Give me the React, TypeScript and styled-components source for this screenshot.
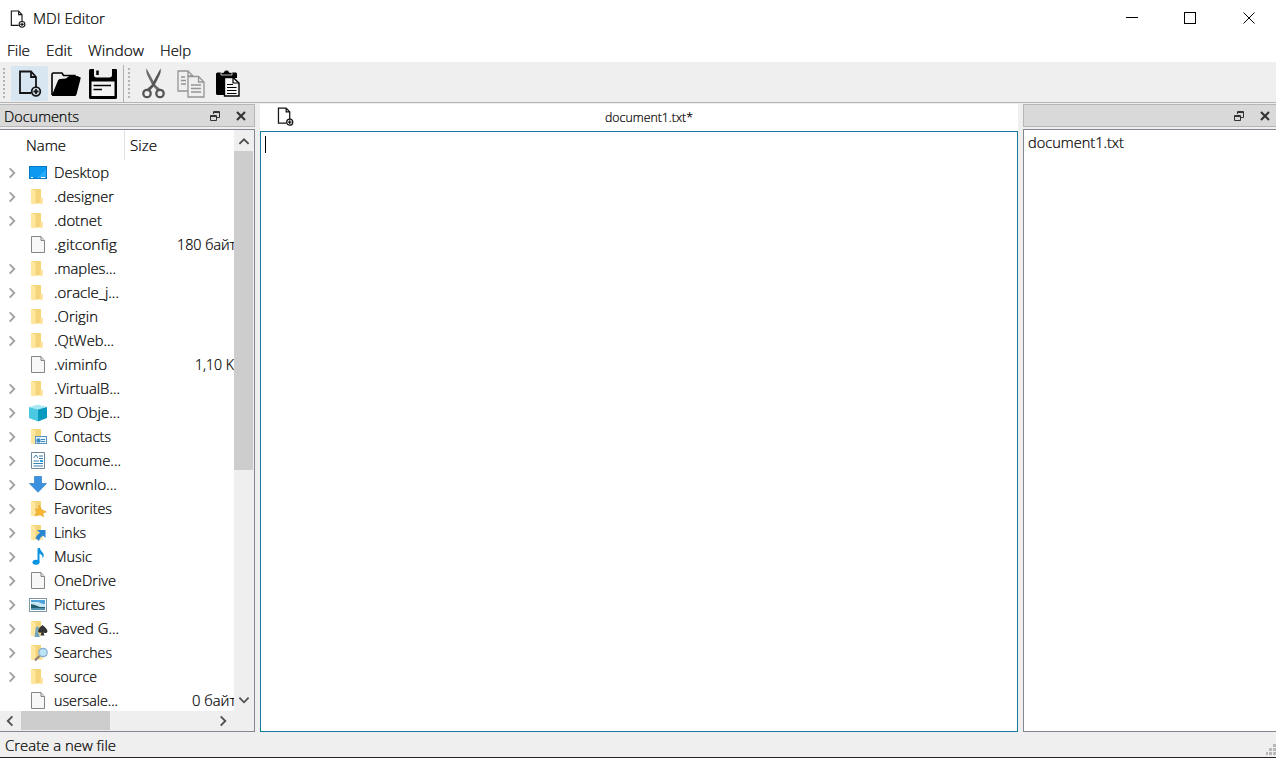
import React from 'react';
import styled, { createGlobalStyle } from 'styled-components';

const Global = createGlobalStyle`
  * { box-sizing: border-box; }
  html, body { margin: 0; padding: 0; overflow: hidden; }
  body { font-family: "Open Sans", "Noto Sans", sans-serif; font-size: 14px; font-weight: 300; color: #000; background: #efefef; }
  svg { display: block; flex: none; }
`;

const Window = styled.div`
  display: flex;
  flex-direction: column;
  width: 1276px;
  height: 758px;
  background: #efefef;
  border-bottom: 1px solid #2b2022;
`;

const Label = styled.span<{ $w: number }>`
  flex: none;
  width: ${p => p.$w}px;
  line-height: 20px;
  white-space: pre;
`;

const TextSvg = styled.svg<{ $size: number }>`
  overflow: visible;
  text { font-size: ${p => p.$size}px; fill: #000; stroke: #000; stroke-width: .22px; }
`;

function Text({ children, w, size = 14 }: { children: string; w: number; size?: number }) {
  return (
    <Label $w={w}>
      <TextSvg $size={size} width={w} height="20">
        <text x="0" y="15" textLength={w} lengthAdjust="spacingAndGlyphs">{children}</text>
      </TextSvg>
    </Label>
  );
}

const TitleBar = styled.header`
  display: flex;
  align-items: center;
  height: 37px;
  padding-left: 10px;
  background: #fff;
`;
const Caption = styled.div`
  flex: 1;
  margin-left: 7px;
`;
const WindowButton = styled.div`
  display: flex;
  align-items: center;
  justify-content: center;
  width: 58px;
  height: 36px;
  padding-bottom: 1px;
  &:last-child { width: 57px; padding-left: 3px; }
`;

const MenuBar = styled.nav`
  display: flex;
  align-items: center;
  gap: 16px;
  height: 26px;
  padding: 3px 0 0 7px;
  background: #fff;
  border-bottom: 1px solid #f0f0f0;
`;

const ToolBar = styled.div`
  display: flex;
  align-items: center;
  height: 40px;
  padding-top: 2px;
  border-bottom: 1px solid #b4b4b4;
`;
const Handle = styled.div<{ $ml: number; $mr: number }>`
  width: 2px;
  height: 31px;
  margin: 0 ${p => p.$mr}px 0 ${p => p.$ml}px;
  background: repeating-linear-gradient(#b4b4b4 0 2px, transparent 2px 4px);
`;
const ToolButton = styled.div<{ $active?: boolean }>`
  display: flex;
  align-items: center;
  justify-content: center;
  width: 37px;
  height: 35px;
  margin-right: ${p => (p.$active ? -1 : 0)}px;
  background: ${p => (p.$active ? '#d8e6f2' : 'transparent')};
`;
const Separator = styled.div`
  width: 1px;
  height: 37px;
  margin-left: 2px;
  background: #b0b0b0;
`;

const Workspace = styled.main`
  display: flex;
  height: 629px;
  padding-top: 1px;
`;
const Dock = styled.section<{ $w: number; $ml?: number }>`
  display: flex;
  flex-direction: column;
  gap: 2px;
  width: ${p => p.$w}px;
  height: 628px;
  margin-left: ${p => p.$ml || 0}px;
`;
const DockTitle = styled.div<{ $right?: boolean }>`
  display: flex;
  align-items: center;
  justify-content: space-between;
  height: 23px;
  padding: 2px ${p => (p.$right ? 6 : 8)}px 0 4px;
  background: #d9d9d9;
  border: 1px solid #b6b6b6;
  border-left-width: ${p => (p.$right ? 1 : 0)}px;
  border-right-width: ${p => (p.$right ? 0 : 1)}px;
`;
const DockButtons = styled.div`
  display: flex;
  gap: 16px;
  margin-left: auto;
  padding-bottom: 2px;
  align-items: center;
`;
const Panel = styled.div<{ $right?: boolean }>`
  display: flex;
  flex-direction: column;
  flex: 1;
  min-height: 0;
  background: #fff;
  border: 1px solid #828790;
  border-left-width: ${p => (p.$right ? 1 : 0)}px;
  border-right-width: ${p => (p.$right ? 0 : 1)}px;
`;
const OpenFile = styled.div`
  height: 26px;
  padding: 3px 4px;
`;

const TreeArea = styled.div`
  display: flex;
  height: 581px;
`;
const Tree = styled.div`
  width: 234px;
  overflow: hidden;
`;
const TreeHeader = styled.div`
  display: flex;
  height: 31px;
`;
const NameHead = styled.div`
  width: 125px;
  height: 30px;
  padding: 6px 0 0 26px;
  border-right: 1px solid #e2e2e2;
`;
const SizeHead = styled.div`padding: 6px 0 0 5px;`;
const Row = styled.div`
  display: flex;
  align-items: center;
  height: 24px;
`;
const Expander = styled.div`
  flex: none;
  width: 29px;
  padding-left: 6px;
`;
const IconCell = styled.div`
  flex: none;
  width: 25px;
`;
const NameCell = styled.div`
  width: 71px;
  flex: none;
`;
const SizeCell = styled.div<{ $start: number }>`
  flex: none;
  margin-left: ${p => p.$start - 125}px;
`;

const VScroll = styled.div`
  display: flex;
  flex-direction: column;
  width: 20px;
  background: #efefef;
`;
const ScrollButton = styled.div<{ $end?: boolean }>`
  display: flex;
  align-items: center;
  justify-content: center;
  width: 19px;
  height: 21px;
  padding: ${p => (p.$end ? '0 0 2px' : '2px 0 0')};
`;
const VTrack = styled.div`flex: 1;`;
const VThumb = styled.div`
  width: 19px;
  height: 319px;
  background: #cdcdcd;
`;
const HScroll = styled.div`
  display: flex;
  height: 20px;
  background: #efefef;
`;
const HButton = styled.div`
  display: flex;
  align-items: center;
  justify-content: center;
  width: 21px;
  height: 20px;
`;
const HTrack = styled.div`width: 191px;`;
const HThumb = styled.div`
  width: 89px;
  height: 19px;
  background: #cdcdcd;
`;

const Document = styled.section`
  display: flex;
  flex-direction: column;
  width: 758px;
  height: 628px;
  margin-left: 5px;
  background: #fff;
`;
const DocTitle = styled.div`
  display: flex;
  align-items: center;
  height: 27px;
  padding: 0 0 3px 17px;
`;
const DocName = styled.div`margin-left: 311px; padding-top: 2px;`;
const Editor = styled.div`
  flex: 1;
  border: 1px solid #177a9f;
  padding: 4px;
`;
const Caret = styled.div`
  width: 1px;
  height: 17px;
  background: #000;
`;

const StatusBar = styled.footer`
  display: flex;
  justify-content: space-between;
  align-items: flex-start;
  height: 25px;
  padding: 4px 0 0 5px;
`;
const Grip = styled.div`padding-top: 8px;`;

function NewFile({ w, h, sw = 1.8 }: { w: number; h: number; sw?: number }) {
  return (
    <svg width={w} height={h} viewBox="0 0 24 27" fill="none" stroke="#151515" strokeWidth={sw}>
      <path d="M13 23H2V1.500H13L18 7V17M13 1.500V7H18" />
      <circle cx="18" cy="21.500" r="4.300" />
      <path d="M18 19V24M15.500 21.500H20.500" />
    </svg>
  );
}
const OpenIcon = () => (
  <svg width="30" height="26" viewBox="0 0 30 26">
    <path d="M1 24V3.500Q1 2 2.500 2H11L12.500 4.500H24V9" fill="none" stroke="#000" strokeWidth="1.600" />
    <path d="M1 24L7 9.500Q7.500 8 9 8L15 7.500L18 5H27L28 6H29Q30 6 29.500 8L25.500 23.500Q25 25 23.500 25H1Z" fill="#000" />
  </svg>
);
const SaveIcon = () => (
  <svg width="28" height="30" viewBox="0 0 28 30">
    <path d="M1.500 0H5V6Q5 8.500 7.500 8.500H20Q23 8.500 23 6V0H27Q28 0 28 1V28.500Q28 30 26.500 30H1.500Q0 30 0 28.500V1.500Q0 0 1.500 0Z" />
    <path d="M8.500 1.500V6" stroke="#000" strokeWidth="2.500" />
    <path d="M2.500 12.500H25.500V27H2.500Z" fill="#f4f4f4" />
    <path d="M4.500 16.500H22M4.500 20.500H13" stroke="#000" strokeWidth="1.500" />
  </svg>
);
const CutIcon = () => (
  <svg width="23" height="31" viewBox="0 0 23 31" fill="none" stroke="#555">
    <path d="M4.500 0.500Q3.500 4 6 8.500L10.500 17.500L15.500 23L18 21L13.500 17Z" fill="#6b6b6b" stroke="none" />
    <path d="M18.500 0.500Q19.500 4 17 8.500L12.500 17.500L7.500 23L5 21L9.500 17Z" fill="#555" stroke="none" />
    <circle cx="5" cy="25.500" r="3.700" strokeWidth="2.300" />
    <circle cx="18" cy="25.500" r="3.700" strokeWidth="2.300" />
  </svg>
);
const CopyIcon = () => (
  <svg width="28" height="28" viewBox="0 0 28 28" fill="#efefef" stroke="#959595" strokeWidth="1.300">
    <path d="M1 1H11L16 6V21H1ZM11 1V6H16M4 7H8M4 10.500H9M4 14H9" />
    <path d="M11 6.500H21.500L27 12V27H11ZM21.500 6.500V12H27M14 15H24M14 18.500H24M14 22H24" />
  </svg>
);
const PasteIcon = () => (
  <svg width="24" height="27" viewBox="0 0 24 27">
    <path d="M1.500 2.500H20Q21 2.500 21 4V8H9V25H1.500Q0 25 0 23.500V4Q0 2.500 1.500 2.500Z" />
    <path d="M5 5V2.500H7.500Q8 0 10.500 0T13.500 2.500H16V5Z" stroke="#efefef" strokeWidth=".8" />
    <path d="M8.500 7.500H17L23 13V26H8.500Z" fill="#f8f8f8" stroke="#000" strokeWidth="1.400" />
    <path d="M17 7.500V13H23M11 14.500H17M11 17.500H20.500M11 20.500H20.500M11 23.500H20.500" fill="none" stroke="#000" strokeWidth="1.200" />
  </svg>
);
const RestoreIcon = () => (
  <svg width="10" height="10" viewBox="0 0 10 10" fill="none" stroke="#333">
    <path d="M3.500 3V.5H9.500V6.500H7M3.500 1.500H9.500" />
    <path d="M.5 4.500H6.500V9.500H.5ZM.5 5.500H6.500" />
  </svg>
);
const CloseIcon = () => (
  <svg width="10" height="10" viewBox="0 0 10 10" stroke="#333" strokeWidth="2.100">
    <path d="M1 1L9 9M9 1L1 9" />
  </svg>
);
const DockControls = () => <DockButtons><RestoreIcon /><CloseIcon /></DockButtons>;

type Dir = 'up' | 'down' | 'left' | 'right';
const chevrons: Record<Dir, string> = {
  up: 'M1.500 8.500L6.500 3.500L11.500 8.500',
  down: 'M1.500 4L6.500 9L11.500 4',
  left: 'M8 1.500L3 6.500L8 11.500',
  right: 'M4 1.500L9 6.500L4 11.500',
};
const Chevron = ({ dir, color = '#505050', sw = 2 }: { dir: Dir; color?: string; sw?: number }) => (
  <svg width="12" height="12" viewBox="0 0 13 13" fill="none" stroke={color} strokeWidth={sw}><path d={chevrons[dir]} /></svg>
);

type Kind = 'desktop' | 'folder' | 'file' | 'cube' | 'contacts' | 'document' | 'download' | 'favorites' | 'links' | 'music' | 'pictures' | 'games' | 'search';

const FolderShape = () => (
  <>
    <path d="M2 1H12V9L13.500 10.500V15.500H2Z" fill="#f5d57c" />
    <path d="M2 1L6.500 2.500V13.500L4.500 16.500L2 15.500Z" fill="#ffe7a0" />
    <path d="M12 9.500L13.500 10.500V15.500H11.500V10Z" fill="#ffe49a" />
  </>
);
function TreeIcon({ kind }: { kind: Kind }) {
  const hasFolder = ['folder', 'contacts', 'favorites', 'links', 'games', 'search'].includes(kind);
  return (
    <svg width="19" height="18" viewBox="0 0 19 18">
      {hasFolder && <FolderShape />}
      {kind === 'desktop' && <><rect x=".5" y="2.500" width="17" height="12" fill="#0b9af0" stroke="#0879c6" /><path d="M8 14L17 5.500V14Z" fill="#25adff" /><path d="M2 13.500H4M12 13.500H16" stroke="#fff" /></>}
      {kind === 'file' && <><path d="M2.500 .5H12L15.500 4.500V16.500H2.500Z" fill="#f7f7f7" stroke="#858585" /><path d="M12 .5V4.500H15.500" fill="#dedede" stroke="#858585" /></>}
      {kind === 'cube' && <><path d="M0 3L9 .5L18 3L9 5.500Z" fill="#a8e9f5" /><path d="M0 3L9 5.500V17.500L0 14Z" fill="#4bc8e2" /><path d="M18 3L9 5.500V17.500L18 14Z" fill="#0799be" /></>}
      {kind === 'contacts' && <><rect x="6.500" y="8.500" width="11" height="7" fill="#e8f5fd" stroke="#5a94bd" /><path d="M8 14V11H11V14ZM12 11.500H16M12 13.500H16" fill="#3c8bc4" stroke="#3c8bc4" /></>}
      {kind === 'document' && <><path d="M2.500 .5H15.500V16.500H2.500Z" fill="#fff" stroke="#72869a" /><path d="M4.500 6L7 3L9 6M10 4H14M10 6.500H14M4.500 9H10M4.500 11.500H14M4.500 14H14" fill="none" stroke="#377eae" /><path d="M11 9H14" stroke="#26a0de" strokeWidth="2" /></>}
      {kind === 'download' && <path d="M5.500 .5H12.500V7.500H17.500L9 16.300L.5 7.500H5.500Z" fill="#3b91df" stroke="#327dbf" strokeWidth=".7" />}
      {kind === 'favorites' && <path d="M10 5L12.500 9.500L17.500 12L14 13L14.500 17L11 14.500L6 16L8 12L6 9L9.500 9Z" fill="#f8b632" stroke="#dc931c" strokeWidth=".4" />}
      {kind === 'links' && <path d="M8 6H16.500V14L14 11.500Q11 13 10 17L6.500 14Q8 10.500 11 8.700Z" fill="#2687d0" />}
      {kind === 'music' && <><path d="M9.500 .5V14" stroke="#0a94df" strokeWidth="2" /><path d="M9 0H11Q11 2.500 13.500 4.500T13.500 10.500Q14 6.500 10 5.500Z" fill="#0a94df" /><ellipse cx="7" cy="14.200" rx="3.500" ry="2.500" fill="#0a94df" /></>}
      {kind === 'pictures' && <><rect x=".5" y="2.500" width="17" height="13" fill="#fff" stroke="#8195a2" /><path d="M2 4H16V14H2Z" fill="#4ea3dc" /><path d="M2 6H9L14 8H16V11H2Z" fill="#c7e6f2" /><path d="M2 8L6 9L11 11H16V12H2Z" fill="#235e70" /><path d="M2 12H16V14H2Z" fill="#5292ae" /></>}
      {kind === 'games' && <><path d="M13.500 5Q9 8.500 9 11T12.500 12.500L11.500 15.500H15.500L14.500 12.500Q18.500 14 18.500 11Q18 8.500 13.500 5Z" fill="#343434" /><path d="M7 7Q10 5.500 10 8.500L8.500 10.500L11 17H5.500Z" fill="#73a5bf" /></>}
      {kind === 'search' && <><path d="M10.500 12L6 16.500" stroke="#8b8176" strokeWidth="2.200" /><circle cx="14" cy="8.500" r="4.200" fill="#bde3f7" stroke="#86add0" strokeWidth="1.200" /></>}
    </svg>
  );
}

interface Entry { name: string; w: number; kind: Kind; size?: string; start?: number; sw?: number; leaf?: boolean }
const entries: Entry[] = [
  { name: 'Desktop', w: 55, kind: 'desktop' },
  { name: '.designer', w: 60, kind: 'folder' },
  { name: '.dotnet', w: 48, kind: 'folder' },
  { name: '.gitconfig', w: 63, kind: 'file', size: '180 байт', start: 177, sw: 59, leaf: true },
  { name: '.maples...', w: 62, kind: 'folder' },
  { name: '.oracle_j...', w: 65, kind: 'folder' },
  { name: '.Origin', w: 44, kind: 'folder' },
  { name: '.QtWeb...', w: 60, kind: 'folder' },
  { name: '.viminfo', w: 53, kind: 'file', size: '1,10 K', start: 195, sw: 39, leaf: true },
  { name: '.VirtualB...', w: 66, kind: 'folder' },
  { name: '3D Obje...', w: 66, kind: 'cube' },
  { name: 'Contacts', w: 57, kind: 'contacts' },
  { name: 'Docume...', w: 67, kind: 'document' },
  { name: 'Downlo...', w: 63, kind: 'download' },
  { name: 'Favorites', w: 58, kind: 'favorites' },
  { name: 'Links', w: 32, kind: 'links' },
  { name: 'Music', w: 38, kind: 'music' },
  { name: 'OneDrive', w: 62, kind: 'file' },
  { name: 'Pictures', w: 51, kind: 'pictures' },
  { name: 'Saved G...', w: 65, kind: 'games' },
  { name: 'Searches', w: 58, kind: 'search' },
  { name: 'source', w: 43, kind: 'folder' },
  { name: 'usersale...', w: 64, kind: 'file', size: '0 байт', start: 192, sw: 44, leaf: true },
];

export default function App() {
  return (
    <>
      <Global />
      <Window>
        <TitleBar>
          <NewFile w={16} h={18} sw={1.7} />
          <Caption><Text w={72}>MDI Editor</Text></Caption>
          <WindowButton><svg width="12" height="12" stroke="#000"><path d="M0 5.500H12" /></svg></WindowButton>
          <WindowButton><svg width="12" height="12" stroke="#000" fill="none"><rect x=".5" y=".5" width="11" height="11" /></svg></WindowButton>
          <WindowButton><svg width="12" height="12" stroke="#000"><path d="M.5 .5L11.500 11.500M11.500 .5L.5 11.500" /></svg></WindowButton>
        </TitleBar>
        <MenuBar>
          <Text w={23}>File</Text><Text w={26}>Edit</Text><Text w={56}>Window</Text><Text w={31}>Help</Text>
        </MenuBar>
        <ToolBar>
          <Handle $ml={3} $mr={6} />
          <ToolButton $active><NewFile w={24} h={27} /></ToolButton>
          <ToolButton><OpenIcon /></ToolButton>
          <ToolButton><SaveIcon /></ToolButton>
          <Separator />
          <Handle $ml={4} $mr={5} />
          <ToolButton><CutIcon /></ToolButton>
          <ToolButton><CopyIcon /></ToolButton>
          <ToolButton><PasteIcon /></ToolButton>
        </ToolBar>
        <Workspace>
          <Dock $w={255}>
            <DockTitle><Text w={75}>Documents</Text><DockControls /></DockTitle>
            <Panel>
              <TreeArea>
                <Tree>
                  <TreeHeader>
                    <NameHead><Text w={40}>Name</Text></NameHead>
                    <SizeHead><Text w={27}>Size</Text></SizeHead>
                  </TreeHeader>
                  {entries.map(e => (
                    <Row key={e.name}>
                      <Expander>{!e.leaf && <Chevron dir="right" color="#a0a0a0" />}</Expander>
                      <IconCell><TreeIcon kind={e.kind} /></IconCell>
                      <NameCell><Text w={e.w}>{e.name}</Text></NameCell>
                      {e.size && <SizeCell $start={e.start!}><Text w={e.sw!}>{e.size}</Text></SizeCell>}
                    </Row>
                  ))}
                </Tree>
                <VScroll>
                  <ScrollButton><Chevron dir="up" /></ScrollButton>
                  <VTrack><VThumb /></VTrack>
                  <ScrollButton $end><Chevron dir="down" /></ScrollButton>
                </VScroll>
              </TreeArea>
              <HScroll>
                <HButton><Chevron dir="left" /></HButton>
                <HTrack><HThumb /></HTrack>
                <HButton><Chevron dir="right" /></HButton>
              </HScroll>
            </Panel>
          </Dock>
          <Document>
            <DocTitle>
              <NewFile w={17} h={19} sw={1.8} />
              <DocName><Text w={88} size={12.5}>document1.txt*</Text></DocName>
            </DocTitle>
            <Editor><Caret /></Editor>
          </Document>
          <Dock $w={253} $ml={5}>
            <DockTitle $right><DockControls /></DockTitle>
            <Panel $right><OpenFile><Text w={96}>document1.txt</Text></OpenFile></Panel>
          </Dock>
        </Workspace>
        <StatusBar>
          <Text w={111}>Create a new file</Text>
          <Grip>
            <svg width="10" height="11" fill="#b9b9b9">
              <path d="M7 0h3v3h-3zM3 4h3v3h-3zM7 4h3v3h-3zM0 8h2v3h-2zM3 8h3v3h-3zM7 8h3v3h-3z" />
            </svg>
          </Grip>
        </StatusBar>
      </Window>
    </>
  );
}
